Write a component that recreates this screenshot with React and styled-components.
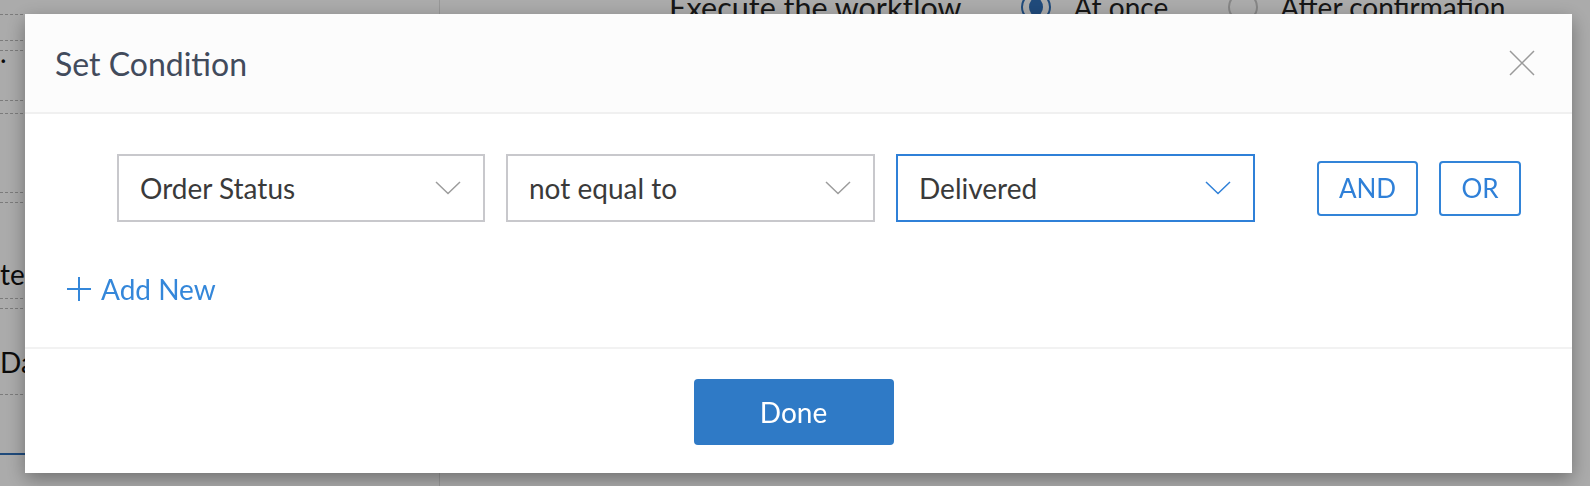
import React, { useState } from "react";
import styled, { createGlobalStyle } from "styled-components";

const GlobalStyle = createGlobalStyle`
  html, body {
    margin: 0;
    padding: 0;
    height: 100%;
  }
  body {
    font-family: Lato, "Noto Sans", "Liberation Sans", sans-serif;
    background: #fff;
    color: #222;
    overflow: hidden;
  }
  * {
    box-sizing: border-box;
  }
`;

const fields = [
  { h: 15, label: "" },
  { h: 26, label: "" },
  { h: 51, label: ".", gap: 9, pad: 34 },
  { h: 80, label: "", gap: 12 },
  { h: 97, label: "te", gap: 9, pad: 10 },
  { h: 87, label: "Da", gap: 9, pad: 18 },
];

const Chevron = ({ active }) => (
  <svg width="26" height="14" viewBox="0 0 26 14">
    <polyline
      points="1,1 13,12.5 25,1"
      fill="none"
      stroke={active ? "#2f80d8" : "#9c9c9c"}
      strokeWidth="1.5"
    />
  </svg>
);

const App = () => {
  const [conditions] = useState([
    { value: "Order Status", width: 368 },
    { value: "not equal to", width: 369 },
    { value: "Delivered", width: 359, active: true },
  ]);

  return (
    <>
      <GlobalStyle />
      <Page>
        <Sidebar>
          {fields.map((f, i) => (
            <Field key={i} $h={f.h} $gap={f.gap || 0} $pad={f.pad || 6}>
              <FieldLabel>{f.label}</FieldLabel>
            </Field>
          ))}
          <ActiveField />
        </Sidebar>
        <Main>
          <TopBar>
            <TopLabel $size={30.5}>Execute the workflow</TopLabel>
            <RadioGroup>
              <Radio $checked />
              <TopLabel>At once</TopLabel>
            </RadioGroup>
            <RadioGroup>
              <Radio />
              <TopLabel>After confirmation</TopLabel>
            </RadioGroup>
          </TopBar>
        </Main>
      </Page>

      <Overlay>
        <Modal>
          <Header>
            <Title>Set Condition</Title>
            <CloseBtn aria-label="close">
              <svg width="26" height="26" viewBox="0 0 26 26">
                <path
                  d="M1 1 L25 25 M25 1 L1 25"
                  stroke="#9a9a9a"
                  strokeWidth="1.5"
                  fill="none"
                />
              </svg>
            </CloseBtn>
          </Header>

          <Body>
            <ConditionRow>
              {conditions.map((c) => (
                <Select key={c.value} $w={c.width} $active={c.active}>
                  <span>{c.value}</span>
                  <Chevron active={c.active} />
                </Select>
              ))}
              <Joiners>
                <JoinBtn $w={101}>AND</JoinBtn>
                <JoinBtn $w={82}>OR</JoinBtn>
              </Joiners>
            </ConditionRow>

            <AddNew>
              <svg width="24" height="24" viewBox="0 0 24 24">
                <path
                  d="M12 0 V24 M0 12 H24"
                  stroke="#3487da"
                  strokeWidth="2"
                  fill="none"
                />
              </svg>
              Add New
            </AddNew>
          </Body>

          <Footer>
            <DoneBtn>Done</DoneBtn>
          </Footer>
        </Modal>
      </Overlay>
    </>
  );
};

export default App;

const Page = styled.div`
  display: flex;
  height: 100vh;
`;

const Sidebar = styled.div`
  width: 440px;
  flex-shrink: 0;
  display: flex;
  flex-direction: column;
  border-right: 1px solid #e2e2e2;
`;

const Field = styled.div`
  height: ${(p) => p.$h}px;
  margin-top: ${(p) => p.$gap}px;
  border-bottom: 1px dashed #b8b8b8;
  border-top: ${(p) => (p.$gap ? "1px dashed #b8b8b8" : "none")};
  display: flex;
  align-items: flex-end;
  padding-bottom: ${(p) => p.$pad}px;
`;

const FieldLabel = styled.span`
  font-size: 28px;
  color: #111;
  line-height: 1;
`;

const ActiveField = styled.div`
  height: 60px;
  border-bottom: 2px solid #2f6fb8;
  & ~ * {
    background: #f1f5fb;
  }
`;

const Main = styled.div`
  flex: 1;
  padding-left: 229px;
`;

const TopBar = styled.div`
  display: flex;
  align-items: center;
  margin-top: -9px;
`;

const TopLabel = styled.span`
  font-size: ${(p) => p.$size || 28}px;
  line-height: 32px;
  white-space: nowrap;
  color: #222;
`;

const RadioGroup = styled.div`
  display: flex;
  align-items: center;
  gap: 22px;
  margin-left: 60px;
`;

const Radio = styled.span`
  width: 30px;
  height: 30px;
  flex-shrink: 0;
  border-radius: 50%;
  border: 2px solid ${(p) => (p.$checked ? "#2f6fb8" : "#c8c8c8")};
  display: flex;
  align-items: center;
  justify-content: center;
  &::after {
    content: "";
    width: 14px;
    height: 18px;
    border-radius: 50%;
    background: ${(p) => (p.$checked ? "#2f6fb8" : "transparent")};
  }
`;

const Overlay = styled.div`
  position: fixed;
  inset: 0;
  background: rgba(0, 0, 0, 0.33);
  display: flex;
  padding: 14px 19px 13px 25px;
`;

const Modal = styled.div`
  flex: 1;
  display: flex;
  flex-direction: column;
  background: #fff;
  box-shadow: 0 6px 18px rgba(0, 0, 0, 0.35);
`;

const Header = styled.div`
  height: 100px;
  flex-shrink: 0;
  display: flex;
  align-items: center;
  justify-content: space-between;
  padding: 0 37px 0 30px;
  background: #fcfcfc;
  border-bottom: 2px solid #f0f0f0;
`;

const Title = styled.h2`
  margin: 0;
  font-size: 32px;
  font-weight: 400;
  color: #424b5c;
`;

const CloseBtn = styled.button`
  border: none;
  background: none;
  padding: 0;
  display: flex;
  cursor: pointer;
`;

const Body = styled.div`
  flex: 1;
  display: flex;
  flex-direction: column;
  padding: 40px 51px 0 42px;
`;

const ConditionRow = styled.div`
  display: flex;
  align-items: center;
  gap: 21px;
  padding-left: 50px;
`;

const Select = styled.div`
  width: ${(p) => p.$w}px;
  height: 68px;
  display: flex;
  align-items: center;
  justify-content: space-between;
  padding: 0 22px 0 21px;
  border: 2px solid ${(p) => (p.$active ? "#2f80d8" : "#c8c8cc")};
  font-size: 28px;
  color: #3a3a3a;
  background: #fff;
`;

const Joiners = styled.div`
  display: flex;
  gap: 21px;
  margin-left: 41px;
`;

const JoinBtn = styled.button`
  width: ${(p) => p.$w}px;
  height: 55px;
  border: 2px solid #3284d8;
  border-radius: 4px;
  background: #fff;
  color: #2f80d8;
  font-family: inherit;
  font-size: 26px;
  padding: 0;
  cursor: pointer;
`;

const AddNew = styled.div`
  display: flex;
  align-items: center;
  gap: 10px;
  margin-top: 50px;
  font-size: 28px;
  line-height: 34px;
  color: #3487da;
  cursor: pointer;
`;

const Footer = styled.div`
  flex-shrink: 0;
  height: 126px;
  display: flex;
  justify-content: center;
  align-items: flex-start;
  padding: 30px 10px 0 0;
  border-top: 2px solid #f2f2f2;
`;

const DoneBtn = styled.button`
  width: 200px;
  height: 66px;
  border: none;
  border-radius: 4px;
  background: #2f7ac6;
  color: #fff;
  font-family: inherit;
  font-size: 28px;
  cursor: pointer;
`;
